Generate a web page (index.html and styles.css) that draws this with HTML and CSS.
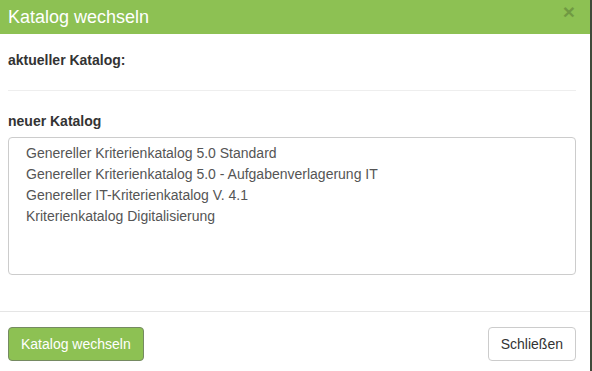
FILE: index.html
```html
<!DOCTYPE html>
<html lang="de">

<head>
  <meta charset="UTF-8">
  <title>Katalog wechseln</title>
  <link rel="stylesheet" href="styles.css">
</head>

<body>
  <div class="modal">
    <!-- Header -->
    <div class="modal-header">
      <h4 class="modal-title">Katalog wechseln</h4>
      <span class="close">&times;</span>
    </div>

    <!-- Body -->
    <div class="modal-body">
      <label class="field-label">aktueller Katalog:</label>
      <hr class="divider">
      <label class="field-label">neuer Katalog</label>
      <div class="listbox">
        <div class="option">Genereller Kriterienkatalog 5.0 Standard</div>
        <div class="option">Genereller Kriterienkatalog 5.0 - Aufgabenverlagerung IT</div>
        <div class="option">Genereller IT-Kriterienkatalog V. 4.1</div>
        <div class="option">Kriterienkatalog Digitalisierung</div>
      </div>
    </div>

    <!-- Footer -->
    <div class="modal-footer">
      <button class="btn btn-green">Katalog wechseln</button>
      <button class="btn btn-default">Schließen</button>
    </div>
  </div>
</body>

</html>
```

FILE: styles.css
```css
body {
  margin: 0;
  background-color: #3f4a3a;
  font-family: "Liberation Sans", Arial, sans-serif;
  font-size: 14px;
  line-height: 20px;
  color: #333;
}

.modal {
  width: 590px;
  height: 371px;
  background-color: #fff;
  display: flex;
  flex-direction: column;
}

/* Green title bar */
.modal-header {
  background-color: #8dc153;
  height: 34px;
  box-sizing: border-box;
  padding: 7px 14px 0 8px;
  display: flex;
  justify-content: space-between;
}

.modal-title {
  margin: 0;
  font-size: 18px;
  font-weight: normal;
  line-height: 20px;
  color: #fff;
}

.close {
  font-size: 21px;
  font-weight: bold;
  line-height: 10px;
  color: #000;
  opacity: 0.2;
  margin-right: 1px;
}

.modal-body {
  padding: 16px 14px 36px 8px;
}

.field-label {
  display: block;
  font-weight: bold;
  color: #333;
}

.divider {
  border: 0;
  border-top: 1px solid #eee;
  margin: 20px 0;
}

.listbox {
  margin-top: 6px;
  height: 138px;
  box-sizing: border-box;
  border: 1px solid #ccc;
  border-radius: 4px;
  padding: 5px 17px;
  color: #555;
}

.option {
  line-height: 21px;
}

.modal-footer {
  border-top: 1px solid #e5e5e5;
  padding: 15px 14px 10px 8px;
  display: flex;
  justify-content: space-between;
}

.btn {
  font-family: inherit;
  font-size: 14px;
  line-height: 20px;
  padding: 6px 12px;
  border-radius: 4px;
  border: 1px solid #ccc;
  cursor: pointer;
}

.btn-green {
  background-color: #8dc153;
  border-color: #758a62;
  color: #fff;
}

.btn-default {
  background-color: #fff;
  color: #333;
}
```
